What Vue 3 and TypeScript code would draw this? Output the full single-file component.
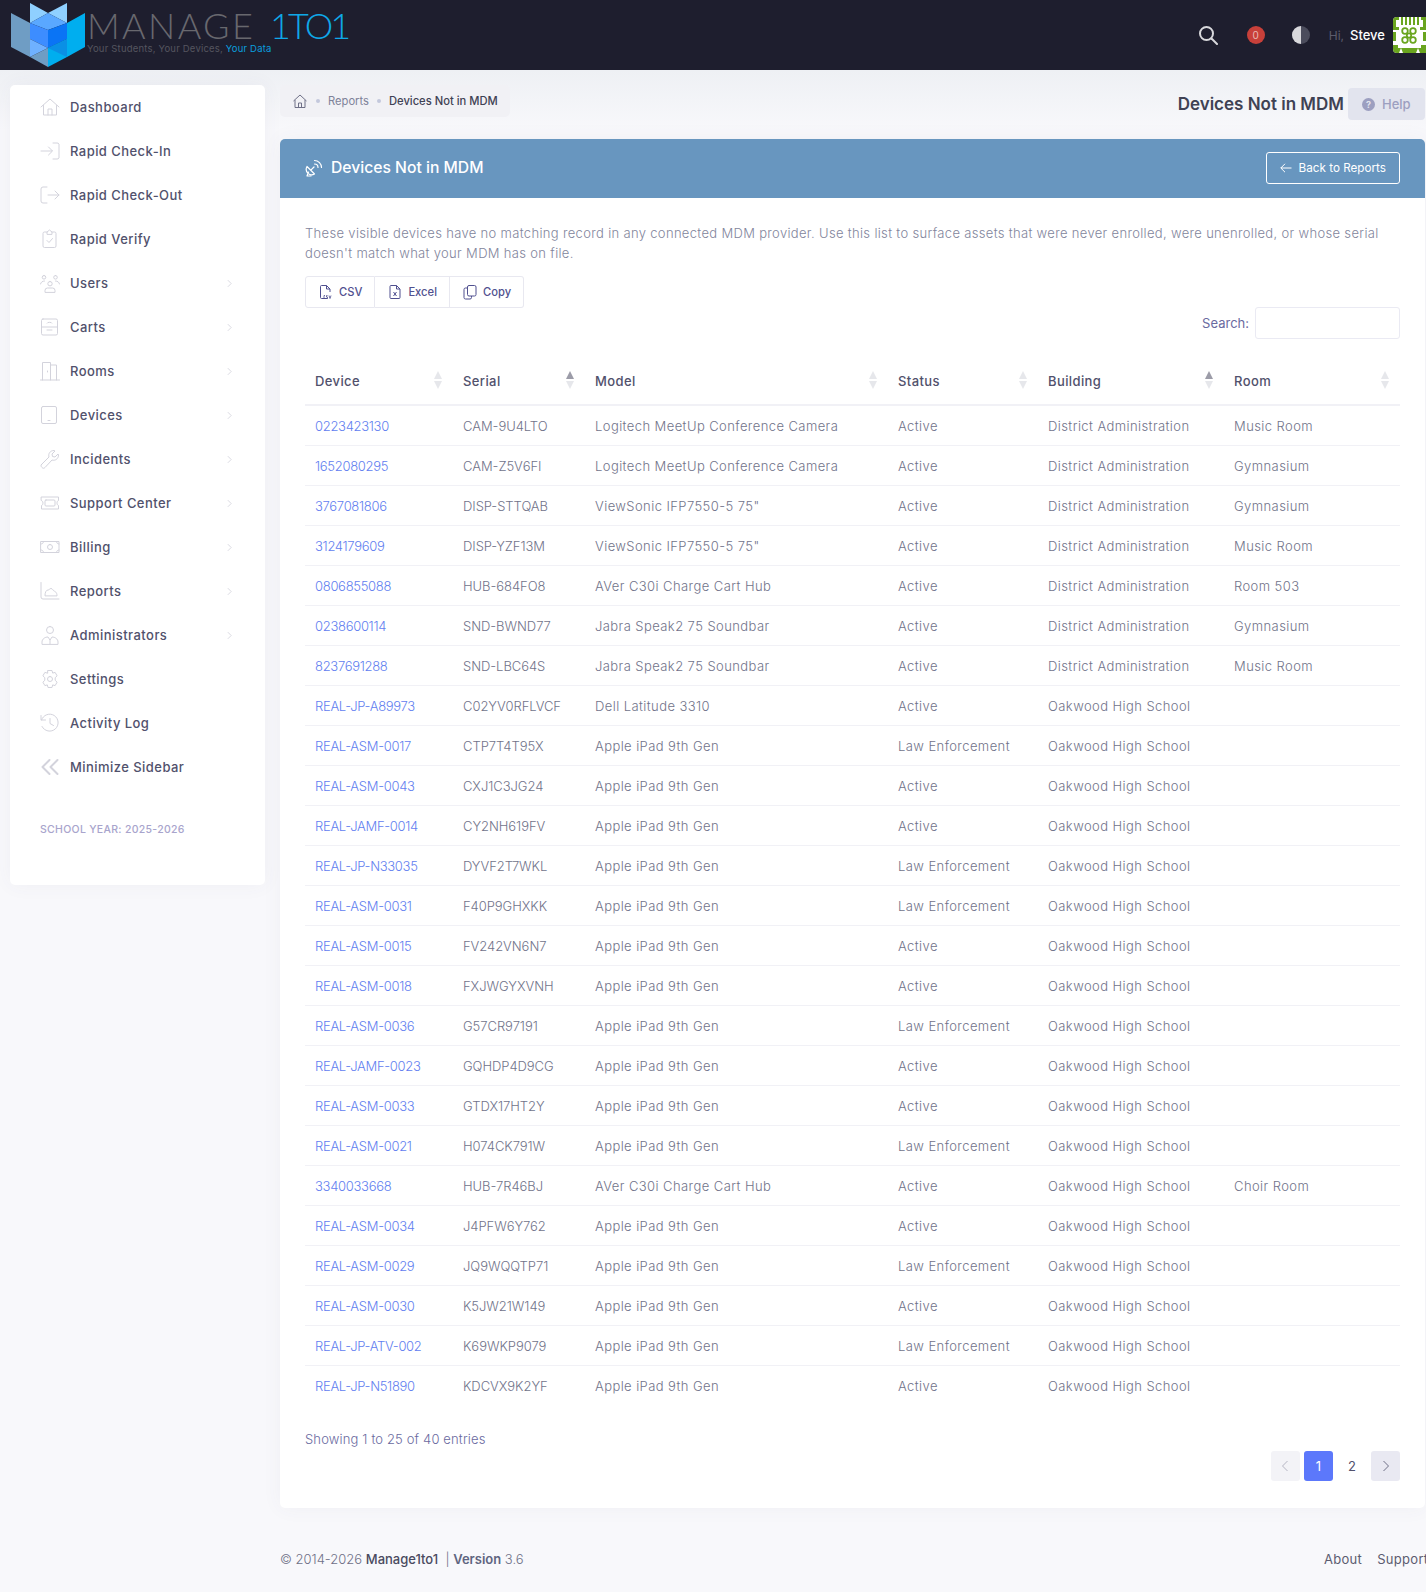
<template>
  <div class="page">
    <header class="topbar">
      <div class="brand">
        <svg class="brand-mark" viewBox="0 0 90 70" width="90" height="70">
          <polygon points="30,3 48,13 30,23" fill="#8fd0ff" />
          <polygon points="67,3 67,23 48,13" fill="#8fd0ff" />
          <polygon points="11,13 30,23 30,57 11,47" fill="#6f9dc4" />
          <polygon points="67,23 85,13 85,47 67,57" fill="#00aeef" />
          <polygon points="48,13 67,23 48,30 30,23" fill="#5aa8ff" />
          <polygon points="30,23 48,30 48,48 30,39" fill="#3d8dff" />
          <polygon points="48,30 67,23 67,39 48,48" fill="#0a74f5" />
          <polygon points="30,39 48,48 30,57" fill="#6fb1ff" />
          <polygon points="30,57 48,48 48,67" fill="#6f9dc4" />
          <polygon points="48,48 67,39 67,57 48,67" fill="#00aeef" />
          <polygon points="48,48 67,39 67,57" fill="#0a90e5" />
        </svg>
        <div class="brand-text">
          <div class="brand-name"><em>MANAGE</em> <span>1TO1</span></div>
          <div class="brand-tag">Your Students, Your Devices, <span>Your Data</span></div>
        </div>
      </div>
      <div class="top-right">
        <svg class="top-search" viewBox="0 0 20 20" width="20" height="20" fill="none" stroke="#d8d8dc" stroke-width="2">
          <circle cx="8.5" cy="8.5" r="6.5" />
          <path d="M13.5 13.5 19 19" stroke-linecap="round" />
        </svg>
        <span class="top-badge">0</span>
        <svg class="top-contrast" viewBox="0 0 18 18" width="18" height="18">
          <circle cx="9" cy="9" r="9" fill="#4b4c5c" />
          <path d="M9 0a9 9 0 0 0 0 18z" fill="#d8d8dc" />
        </svg>
        <span class="top-hi">Hi,</span>
        <span class="top-user">Steve</span>
        <svg class="top-avatar" viewBox="0 0 33 36" width="33" height="36">
          <rect width="33" height="36" fill="#fff" />
          <path d="M0 0h6v3H3v7h3v3H0zM8 0h2v8H8zM12 0h2v8h-2zM16 0h2v8h-2zM20 0h2v8h-2zM24 0h2v8h-2zM28 0h5v13h-6v-3h3V3h-2zM0 15h3v9H0zM30 15h3v9h-3z" fill="#6aa51f" />
          <path d="M0 28h33v8H0z" fill="#6aa51f" />
          <path d="M5 28h23v3H5zM8 31l2 5H6zM25 31l2 5h-4z" fill="#fff" />
          <g fill="none" stroke="#6aa51f" stroke-width="1.800">
            <circle cx="12" cy="14" r="2.800" />
            <circle cx="20" cy="14" r="2.800" />
            <circle cx="12" cy="23" r="2.800" />
            <circle cx="20" cy="23" r="2.800" />
            <circle cx="16" cy="18.500" r="2.200" />
          </g>
        </svg>
      </div>
    </header>

    <div class="shell">
      <aside class="sidebar">
        <nav class="side-nav">
          <a v-for="item in navItems" :key="item.label" class="side-item">
            <svg class="side-icon" viewBox="0 0 20 20" width="20" height="20" fill="none" stroke="#d3d3dc" :stroke-width="item.weight ?? 1" stroke-linecap="round" stroke-linejoin="round">
              <path :d="item.icon" />
            </svg>
            <span class="side-label">{{ item.label }}</span>
            <svg v-if="item.more" class="side-more" viewBox="0 0 6 10" width="5" height="9" fill="none" stroke="#d3d3dc">
              <path d="M1 1l4 4-4 4" />
            </svg>
          </a>
        </nav>
        <div class="side-year">SCHOOL YEAR: 2025-2026</div>
      </aside>

      <main class="content">
        <div class="title-row">
          <div class="crumbs">
            <svg viewBox="0 0 16 16" width="16" height="16" fill="none" stroke="#6f7087" stroke-linejoin="round">
              <path d="M1.500 8 8 2l6.500 6M3 7v7.500h10V7M6.500 14.500V10h3v4.500" />
            </svg>
            <i class="crumb-dot"></i>
            <span class="crumb-link">Reports</span>
            <i class="crumb-dot"></i>
            <span class="crumb-here">Devices Not in MDM</span>
          </div>
          <h1 class="page-title">Devices Not in MDM</h1>
          <button type="button" class="help-btn"><span class="help-q">?</span>Help</button>
        </div>

        <section class="card">
          <div class="card-head">
            <svg class="card-head-icon" viewBox="0 0 18 18" width="18" height="18" fill="none" stroke="#fff" stroke-width="1.200" stroke-linecap="round" stroke-linejoin="round">
              <path d="M2 7.500a5.500 5.500 0 0 0 7.500 7.500zM5.800 11.200 9 8M3.500 13 2 17h4" />
              <path d="M9.500 5a3.500 3.500 0 0 1 3.500 3.500M9.500 1.500a7 7 0 0 1 7 7" />
            </svg>
            <h2>Devices Not in MDM</h2>
            <button type="button" class="back-btn">
              <svg viewBox="0 0 12 12" width="12" height="12" fill="none" stroke="#fff"><path d="M11.500 6H.800M5 1.800.800 6 5 10.200" /></svg>
              Back to Reports
            </button>
          </div>

          <div class="card-body">
            <p class="intro">These visible devices have no matching record in any connected MDM provider. Use this list to surface assets that were never enrolled, were unenrolled, or whose serial doesn't match what your MDM has on file.</p>

            <div class="exports">
              <button type="button" class="export-btn">
                <svg viewBox="0 0 16 16" width="16" height="16" fill="none" stroke="#4f4f8f"><path d="M9.500 14.500H3.500a1 1 0 0 1-1-1v-11a1 1 0 0 1 1-1h5l3.500 3.500V8M8.500 1.500V5H12" /><path d="M7 11.500h-1v3h1M9.500 11.500h-1v1.500h1v1.500h-1M11 11.500l1 3 1-3" stroke-width=".8" /></svg>
                CSV
              </button>
              <button type="button" class="export-btn">
                <svg viewBox="0 0 16 16" width="16" height="16" fill="none" stroke="#4f4f8f"><path d="M4 1.500h5.500L13 5v8.500a1 1 0 0 1-1 1H4a1 1 0 0 1-1-1v-11a1 1 0 0 1 1-1zM9.500 1.500V5H13M6.500 8l3 4M9.500 8l-3 4" /></svg>
                Excel
              </button>
              <button type="button" class="export-btn">
                <svg viewBox="0 0 16 16" width="16" height="16" fill="none" stroke="#4f4f8f"><rect x="5.500" y="1.500" width="8.500" height="10.500" rx="1.500" /><path d="M5.500 4H3.500A1.500 1.500 0 0 0 2 5.500v8A1.500 1.500 0 0 0 3.500 15H8a1.500 1.500 0 0 0 1.500-1.500V12" /></svg>
                Copy
              </button>
            </div>

            <label class="search-row">
              <span>Search:</span>
              <input type="text" class="search-input" />
            </label>

            <table class="devices">
              <colgroup>
                <col v-for="col in columns" :key="col.label" :class="col.cls" />
              </colgroup>
              <thead>
                <tr>
                  <th v-for="col in columns" :key="col.label">
                    {{ col.label }}
                    <span class="sort" :class="{ 'sort-on': col.sorted }"></span>
                  </th>
                </tr>
              </thead>
              <tbody>
                <tr v-for="row in rows" :key="row.device">
                  <td class="cell-device"><a class="device-link">{{ row.device }}</a></td>
                  <td class="cell-serial">{{ row.serial }}</td>
                  <td>{{ row.model }}</td>
                  <td>{{ row.status }}</td>
                  <td>{{ row.building }}</td>
                  <td>{{ row.room }}</td>
                </tr>
              </tbody>
            </table>

            <div class="table-info">Showing 1 to 25 of 40 entries</div>
            <div class="pager">
              <span class="page-btn page-prev"><svg viewBox="0 0 8 12" width="8" height="12" fill="none" stroke="#b5b5c3"><path d="M6.500 1 1.500 6l5 5" /></svg></span>
              <span class="page-btn page-on">1</span>
              <span class="page-btn page-num">2</span>
              <span class="page-btn page-next"><svg viewBox="0 0 8 12" width="8" height="12" fill="none" stroke="#6f7087"><path d="M1.500 1l5 5-5 5" /></svg></span>
            </div>
          </div>
        </section>

        <footer class="foot">
          <div>© 2014-2026 <b class="foot-name">Manage1to1</b> &nbsp;| <b>Version</b> 3.6</div>
          <div class="foot-links"><span>About</span><span>Support</span></div>
        </footer>
      </main>
    </div>
  </div>
</template>

<script setup lang="ts">
interface DeviceRow {
  device: string
  serial: string
  model: string
  status: string
  building: string
  room: string
}

interface NavItem {
  label: string
  more: boolean
  icon: string
  weight?: number
}

const navItems: NavItem[] = [
  { label: 'Dashboard', more: false, icon: 'M1 10 10 2l9 8M3.500 8.500V18h13V8.500M8 18v-6h4v6' },
  { label: 'Rapid Check-In', more: false, icon: 'M1 10h11M8.500 6l4 4-4 4M13 2h4a2 2 0 0 1 2 1v14a2 2 0 0 1-2 1h-4' },
  { label: 'Rapid Check-Out', more: false, icon: 'M7 2H3a2 2 0 0 0-2 2v12a2 2 0 0 0 2 2h4M8 10h11M15 6l4 4-4 4' },
  { label: 'Rapid Verify', more: false, icon: 'M7 3H4.500a1.500 1.500 0 0 0-1.500 1.500V17a1.500 1.500 0 0 0 1.500 1.500h10A1.500 1.500 0 0 0 16 17V4.500A1.500 1.500 0 0 0 14.500 3H12M7 5V3l2.500-2L12 3v2zM7 11.500l2 2 3.500-4' },
  { label: 'Users', more: true, icon: 'M10 8.500a2.200 2.200 0 1 0 0 4.400 2.200 2.200 0 0 0 0-4.400zM5 19v-1.500a2.500 2.500 0 0 1 2.500-2.500h5a2.500 2.500 0 0 1 2.500 2.500V19zM4 2.500a1.800 1.800 0 1 0 0 3.600 1.800 1.800 0 0 0 0-3.600zM15.500 2.500a1.800 1.800 0 1 0 0 3.600 1.800 1.800 0 0 0 0-3.600zM.500 11c.5-2 2-3 4-3M19.500 11c-.5-2-2-3-4-3' },
  { label: 'Carts', more: true, icon: 'M3 2h13a1.500 1.500 0 0 1 1.500 1.500v13A1.500 1.500 0 0 1 16 18H3a1.500 1.500 0 0 1-1.500-1.500v-13A1.500 1.500 0 0 1 3 2zM1.500 10h16M7 6c0-1 5-1 5 0M7 13h5' },
  { label: 'Rooms', more: true, icon: 'M.500 19h19M2.500 19V1.500h8V19M10.500 4h6v15M7.500 10v1' },
  { label: 'Devices', more: true, icon: 'M3 1.500h12A1.500 1.500 0 0 1 16.500 3v14a1.500 1.500 0 0 1-1.500 1.500H3A1.500 1.500 0 0 1 1.500 17V3A1.500 1.500 0 0 1 3 1.500zM8 15.500h2' },
  { label: 'Incidents', more: true, icon: 'M1.500 15.500 9 8c-1-3 1-6.500 5-6.500l1 .5-3 3 .5 2.500 2.500.5 3-3 .5 1c0 4-3.500 6-6.500 5L5 18.500c-1 1-2 1-3 0s-1.500-2-.5-3z' },
  { label: 'Support Center', more: true, icon: 'M1.500 4h17v3.500c-2 .5-2 4.500 0 5V16h-17v-3.500c2-.5 2-4.500 0-5zM6 7h8a1 1 0 0 1 1 1v4a1 1 0 0 1-1 1H6a1 1 0 0 1-1-1V8a1 1 0 0 1 1-1z' },
  { label: 'Billing', more: true, icon: 'M1 4.500h18v11H1zM3.500 4.500c0 1.500-1 2.500-2.500 2.500M16.500 4.500c0 1.500 1 2.500 2.500 2.500M3.500 15.500c0-1.500-1-2.500-2.500-2.500M16.500 15.500c0-1.500 1-2.500 2.500-2.500M10 7.500a2.500 2.500 0 1 0 0 5 2.500 2.500 0 0 0 0-5z' },
  { label: 'Reports', more: true, icon: 'M1 1.500V16a2 2 0 0 0 2 2h16M5 14.500c0-3 1-5.500 3-5.500 1.500 0 1.500-1.500 3-1.500s2 2 3 2.500 3 1 3 4.500z' },
  { label: 'Administrators', more: true, icon: 'M10 1.500a3.500 3.500 0 1 0 0 7 3.500 3.500 0 0 0 0-7zM2 19v-2c0-3 3-5 6-5l2 3 2-3c3 0 6 2 6 5v2zM10 15v4' },
  { label: 'Settings', more: false, icon: 'M8 1.500h4l.7 2.600 2.400-.7 2 3.400-1.900 1.900v2.600l1.900 1.900-2 3.400-2.400-.7-.7 2.600H8l-.7-2.600-2.400.7-2-3.400 1.900-1.900V8.700L2.900 6.800l2-3.400 2.400.7zM10 7.500a2.500 2.500 0 1 0 0 5 2.500 2.500 0 0 0 0-5z' },
  { label: 'Activity Log', more: false, icon: 'M1 2.500V7h4.500M1.500 7A8.500 8.500 0 1 1 2 13.500M10 5.500V10.500l3.500 2' },
  { label: 'Minimize Sidebar', more: false, weight: 2, icon: 'M9.500 3 2.500 10l7 7M17.500 3l-7 7 7 7' },
]

const columns = [
  { label: 'Device', cls: 'col-device', sorted: false },
  { label: 'Serial', cls: 'col-serial', sorted: true },
  { label: 'Model', cls: 'col-model', sorted: false },
  { label: 'Status', cls: 'col-status', sorted: false },
  { label: 'Building', cls: 'col-building', sorted: true },
  { label: 'Room', cls: 'col-room', sorted: false },
]

const DA = 'District Administration'
const OH = 'Oakwood High School'
const IPAD = 'Apple iPad 9th Gen'
const LAW = 'Law Enforcement'

function row(device: string, serial: string, model: string, status: string, building: string, room = ''): DeviceRow {
  return { device, serial, model, status, building, room }
}

const rows: DeviceRow[] = [
  row('0223423130', 'CAM-9U4LTO', 'Logitech MeetUp Conference Camera', 'Active', DA, 'Music Room'),
  row('1652080295', 'CAM-Z5V6FI', 'Logitech MeetUp Conference Camera', 'Active', DA, 'Gymnasium'),
  row('3767081806', 'DISP-STTQAB', 'ViewSonic IFP7550-5 75"', 'Active', DA, 'Gymnasium'),
  row('3124179609', 'DISP-YZF13M', 'ViewSonic IFP7550-5 75"', 'Active', DA, 'Music Room'),
  row('0806855088', 'HUB-684FO8', 'AVer C30i Charge Cart Hub', 'Active', DA, 'Room 503'),
  row('0238600114', 'SND-BWND77', 'Jabra Speak2 75 Soundbar', 'Active', DA, 'Gymnasium'),
  row('8237691288', 'SND-LBC64S', 'Jabra Speak2 75 Soundbar', 'Active', DA, 'Music Room'),
  row('REAL-JP-A89973', 'C02YV0RFLVCF', 'Dell Latitude 3310', 'Active', OH),
  row('REAL-ASM-0017', 'CTP7T4T95X', IPAD, LAW, OH),
  row('REAL-ASM-0043', 'CXJ1C3JG24', IPAD, 'Active', OH),
  row('REAL-JAMF-0014', 'CY2NH619FV', IPAD, 'Active', OH),
  row('REAL-JP-N33035', 'DYVF2T7WKL', IPAD, LAW, OH),
  row('REAL-ASM-0031', 'F40P9GHXKK', IPAD, LAW, OH),
  row('REAL-ASM-0015', 'FV242VN6N7', IPAD, 'Active', OH),
  row('REAL-ASM-0018', 'FXJWGYXVNH', IPAD, 'Active', OH),
  row('REAL-ASM-0036', 'G57CR97191', IPAD, LAW, OH),
  row('REAL-JAMF-0023', 'GQHDP4D9CG', IPAD, 'Active', OH),
  row('REAL-ASM-0033', 'GTDX17HT2Y', IPAD, 'Active', OH),
  row('REAL-ASM-0021', 'H074CK791W', IPAD, LAW, OH),
  row('3340033668', 'HUB-7R46BJ', 'AVer C30i Charge Cart Hub', 'Active', OH, 'Choir Room'),
  row('REAL-ASM-0034', 'J4PFW6Y762', IPAD, 'Active', OH),
  row('REAL-ASM-0029', 'JQ9WQQTP71', IPAD, LAW, OH),
  row('REAL-ASM-0030', 'K5JW21W149', IPAD, 'Active', OH),
  row('REAL-JP-ATV-002', 'K69WKP9079', IPAD, LAW, OH),
  row('REAL-JP-N51890', 'KDCVX9K2YF', IPAD, 'Active', OH),
]
</script>

<style>
html,
body {
  margin: 0;
  background: #f8f8fb;
  overflow-x: hidden;
}
</style>

<style scoped>
.page {
  width: 1426px;
  height: 1592px;
  overflow: hidden;
  font-family: Inter, "Noto Sans", sans-serif;
  background: linear-gradient(180deg, #eef0f4 70px, #f8f8fb 130px);
  color: #7e8299;
}

.topbar {
  height: 70px;
  display: flex;
  align-items: center;
  justify-content: space-between;
  background: #1e1e2e;
}

.brand {
  display: flex;
  align-items: flex-start;
  height: 70px;
}

.brand-mark {
  flex-shrink: 0;
}

.brand-text {
  margin-left: -3px;
  padding-top: 8px;
}

.brand-name {
  font-family: Lato, sans-serif;
  font-size: 36px;
  font-weight: 300;
  line-height: 35px;
  color: #68686e;
  white-space: nowrap;
}

.brand-name em {
  font-style: normal;
  letter-spacing: 2.400px;
}

.brand-name span {
  margin-left: 5px;
  color: #0fa8e8;
  letter-spacing: -2.800px;
}

.brand-tag {
  font-size: 9.500px;
  line-height: 12px;
  color: #55555f;
  white-space: nowrap;
  letter-spacing: 0.2px;
}

.brand-tag span {
  color: #0a9fdf;
  font-weight: 400;
}

.top-right {
  display: flex;
  align-items: center;
}

.top-badge {
  width: 18px;
  height: 18px;
  margin-left: 29px;
  border-radius: 50%;
  background: #c8403a;
  color: #e9b8b4;
  font-size: 10px;
  line-height: 18px;
  text-align: center;
}

.top-contrast {
  margin-left: 27px;
}

.top-hi {
  margin-left: 19px;
  font-size: 12px;
  color: #5c5c6c;
}

.top-user {
  margin-left: 6px;
  font-size: 13px;
  font-weight: 500;
  color: #fff;
  width: 35px;
}

.top-avatar {
  margin-left: 8px;
  border-radius: 4px 0 0 4px;
}

.shell {
  display: flex;
  align-items: flex-start;
  padding: 15px 1px 0 10px;
}

.sidebar {
  width: 255px;
  height: 800px;
  flex-shrink: 0;
  box-sizing: border-box;
  padding: 0 30px;
  background: #fff;
  border-radius: 5px;
  box-shadow: 0 0 20px rgba(76, 87, 125, 0.05);
}

.side-item {
  height: 44px;
  display: flex;
  align-items: center;
  font-size: 13px;
  font-weight: 500;
  color: #51516c;
}

.side-icon {
  flex-shrink: 0;
}

.side-label {
  margin-left: 10px;
  flex: 1;
  white-space: nowrap;
  letter-spacing: 0.45px;
}

.side-more {
  flex-shrink: 0;
  margin-right: 3px;
}

.side-year {
  margin-top: 34px;
  font-size: 10.500px;
  font-weight: 500;
  letter-spacing: 0.3px;
  line-height: 14px;
  color: #a8a4cc;
  white-space: nowrap;
}

.content {
  flex: 1;
  min-width: 0;
  margin-left: 15px;
}

.title-row {
  display: flex;
  align-items: flex-start;
  height: 54px;
}

.crumbs {
  height: 32px;
  display: flex;
  align-items: center;
  gap: 8px;
  padding: 0 12px;
  border-radius: 5px;
  background: #f1f1f5;
  font-size: 11.200px;
  white-space: nowrap;
}

.crumb-dot {
  width: 4px;
  height: 4px;
  border-radius: 50%;
  background: #c3c8dc;
}

.crumb-link {
  color: #7e8299;
}

.crumb-here {
  color: #3f4254;
  font-weight: 500;
}

.page-title {
  margin: 3px 4px 0 auto;
  font-size: 17px;
  font-weight: 600;
  line-height: 32px;
  color: #3f4254;
  white-space: nowrap;
}

.help-btn {
  display: flex;
  align-items: center;
  gap: 7px;
  width: 77px;
  height: 32px;
  margin-top: 3px;
  padding: 0 14px;
  border: none;
  border-radius: 4px;
  background: #e2e4ee;
  color: #9c9fc0;
  font: inherit;
  font-size: 13px;
  font-weight: 500;
}

.help-q {
  width: 13px;
  height: 13px;
  flex-shrink: 0;
  border-radius: 50%;
  background: #9c9fc0;
  color: #e2e4ee;
  font-size: 9px;
  font-weight: 700;
  line-height: 13px;
  text-align: center;
}

.card {
  height: 1369px;
  background: #fff;
  border-radius: 5px;
  box-shadow: 0 0 20px rgba(76, 87, 125, 0.05);
}

.card-head {
  height: 59px;
  box-sizing: border-box;
  display: flex;
  align-items: center;
  padding: 0 25px 2px;
  border-radius: 5px 5px 0 0;
  background: #6896bf;
}

.card-head-icon {
  flex-shrink: 0;
}

.card-head h2 {
  margin: 0 0 0 8px;
  font-size: 15.700px;
  font-weight: 500;
  color: #fff;
}

.back-btn {
  display: flex;
  align-items: center;
  gap: 7px;
  height: 32px;
  margin-left: auto;
  padding: 0 13px;
  border: 1px solid #fff;
  border-radius: 3px;
  background: transparent;
  color: #fff;
  font: inherit;
  font-size: 11.700px;
}

.card-body {
  padding: 26px 25px 0;
}

.intro {
  margin: 0;
  font-size: 13px;
  font-weight: 300;
  line-height: 19.500px;
  letter-spacing: 0.33px;
  color: #82859c;
}

.exports {
  display: inline-flex;
  margin-top: 13px;
  vertical-align: top;
}

.export-btn {
  display: flex;
  align-items: center;
  gap: 5px;
  height: 32px;
  padding: 0 12px;
  border: 1px solid #e8e8f0;
  border-left-width: 0;
  background: #fff;
  color: #51518f;
  font: inherit;
  font-size: 11.200px;
  font-weight: 500;
}

.export-btn:first-child {
  border-left-width: 1px;
  border-radius: 3px 0 0 3px;
}

.export-btn:last-child {
  border-radius: 0 3px 3px 0;
}

.search-row {
  display: flex;
  justify-content: flex-end;
  align-items: center;
  gap: 6px;
  margin-top: -1px;
  font-size: 13px;
  color: #6a6aa0;
}

.search-input {
  width: 145px;
  height: 32px;
  box-sizing: border-box;
  border: 1px solid #eaeaf3;
  border-radius: 3px;
  background: #fff;
}

.devices {
  width: 1095px;
  margin-top: 18px;
  table-layout: fixed;
  border-collapse: collapse;
  font-size: 13px;
}

.col-device { width: 148px; }
.col-serial { width: 132px; }
.col-model { width: 303px; }
.col-status { width: 150px; }
.col-building { width: 186px; }
.col-room { width: 176px; }

.devices th {
  position: relative;
  height: 47px;
  padding: 0 10px;
  border-bottom: 2px solid #f1f1f6;
  text-align: left;
  font-weight: 500;
  letter-spacing: 0.4px;
  color: #51516c;
}

.devices td {
  height: 39px;
  padding: 0 10px;
  border-bottom: 1px solid #f1f1f6;
  font-weight: 300;
  letter-spacing: 0.42px;
  color: #71738a;
  white-space: nowrap;
}

.devices td.cell-device {
  letter-spacing: -0.3px;
}

.devices td.cell-serial {
  letter-spacing: -0.05px;
}

.devices tbody tr:last-child td {
  border-bottom: none;
}

.device-link {
  color: #6280f0;
}

.sort {
  position: absolute;
  top: 14px;
  right: 11px;
  width: 0;
  height: 0;
  border-left: 4.500px solid transparent;
  border-right: 4.500px solid transparent;
  border-bottom: 8px solid #e6e7eb;
}

.sort::after {
  content: "";
  position: absolute;
  top: 10px;
  left: -4.500px;
  width: 0;
  height: 0;
  border-left: 4.500px solid transparent;
  border-right: 4.500px solid transparent;
  border-top: 8px solid #e6e7eb;
}

.sort-on {
  border-bottom-color: #9c9ca8;
}

.table-info {
  margin-top: 24px;
  font-size: 13px;
  font-weight: 300;
  line-height: 20px;
  letter-spacing: 0.15px;
  color: #6a6aa0;
}

.pager {
  display: flex;
  justify-content: flex-end;
  gap: 4.500px;
  margin-top: 2px;
}

.page-btn {
  width: 29px;
  height: 30px;
  display: flex;
  align-items: center;
  justify-content: center;
  border-radius: 3px;
  font-size: 13px;
}

.page-prev {
  background: #f3f3f7;
}

.page-on {
  background: #5c78fb;
  color: #fff;
}

.page-num {
  color: #51516c;
}

.page-next {
  background: #e9e9f2;
}

.foot {
  display: flex;
  justify-content: space-between;
  margin-top: 41px;
  font-size: 13px;
  font-weight: 300;
  line-height: 20px;
  color: #6f7087;
  white-space: nowrap;
}

.foot b {
  font-weight: 600;
  color: #5f6580;
}

.foot-name {
  font-weight: 500 !important;
  color: #4a4a60 !important;
}

.foot-links {
  display: flex;
  gap: 15px;
  width: 101px;
  font-weight: 400;
  letter-spacing: 0.3px;
  color: #5c5c70;
}
</style>
